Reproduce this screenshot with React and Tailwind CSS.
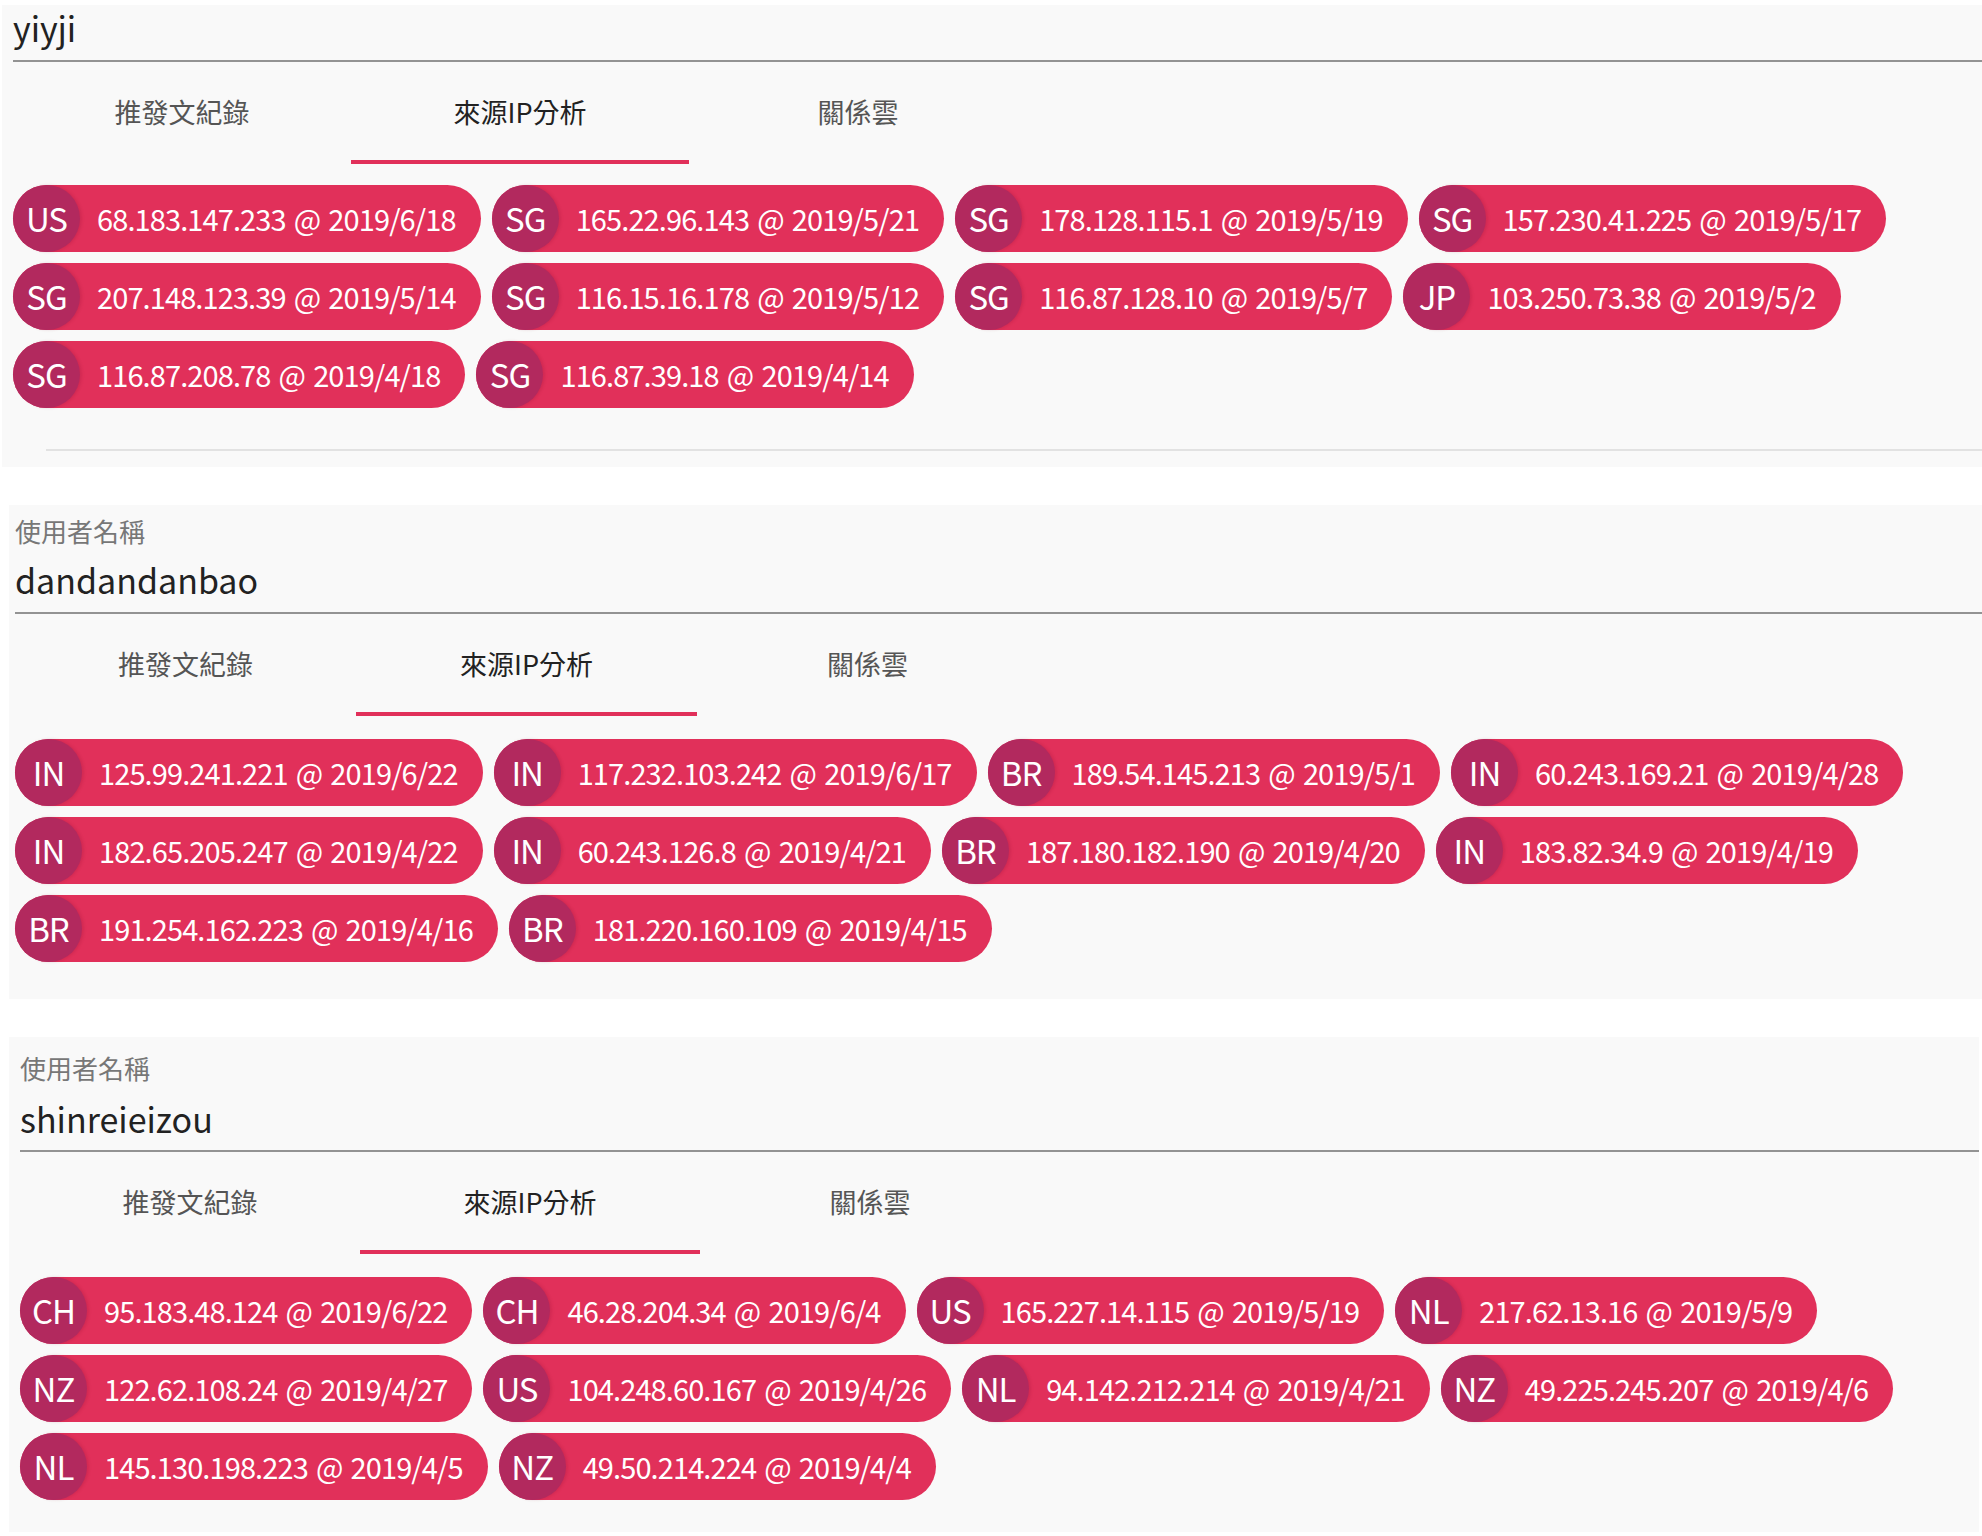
const PANELS = [
  {
    user: 'yiyji',
    showLabel: false,
    wrap: 'mt-[5px] ml-[2px] pt-[1px] pl-[11px] pb-[16px]',
    chipsTop: 'mt-[21px]',
    underPad: 'pb-[10px]',
    tabW: 'w-[338px]',
    divider: true,
    ips: [
      ['US', '68.183.147.233 @ 2019/6/18'],
      ['SG', '165.22.96.143 @ 2019/5/21'],
      ['SG', '178.128.115.1 @ 2019/5/19'],
      ['SG', '157.230.41.225 @ 2019/5/17'],
      ['SG', '207.148.123.39 @ 2019/5/14'],
      ['SG', '116.15.16.178 @ 2019/5/12'],
      ['SG', '116.87.128.10 @ 2019/5/7'],
      ['JP', '103.250.73.38 @ 2019/5/2'],
      ['SG', '116.87.208.78 @ 2019/4/18'],
      ['SG', '116.87.39.18 @ 2019/4/14'],
    ],
  },
  {
    user: 'dandandanbao',
    showLabel: true,
    wrap: 'mt-[38px] ml-[9px] pt-[11px] pl-[6px] pb-[37px]',
    labelGap: 'mt-[12px]',
    underPad: 'pb-[10px]',
    chipsTop: 'mt-[23px]',
    tabW: 'w-[341px]',
    ips: [
      ['IN', '125.99.241.221 @ 2019/6/22'],
      ['IN', '117.232.103.242 @ 2019/6/17'],
      ['BR', '189.54.145.213 @ 2019/5/1'],
      ['IN', '60.243.169.21 @ 2019/4/28'],
      ['IN', '182.65.205.247 @ 2019/4/22'],
      ['IN', '60.243.126.8 @ 2019/4/21'],
      ['BR', '187.180.182.190 @ 2019/4/20'],
      ['IN', '183.82.34.9 @ 2019/4/19'],
      ['BR', '191.254.162.223 @ 2019/4/16'],
      ['BR', '181.220.160.109 @ 2019/4/15'],
    ],
  },
  {
    user: 'shinreieizou',
    showLabel: true,
    wrap: 'mt-[38px] ml-[9px] mr-[3px] pt-[16px] pl-[11px] pb-[32px]',
    labelGap: 'mt-[14px]',
    underPad: 'pb-[9px]',
    chipsTop: 'mt-[23px]',
    tabW: 'w-[340px]',
    ips: [
      ['CH', '95.183.48.124 @ 2019/6/22'],
      ['CH', '46.28.204.34 @ 2019/6/4'],
      ['US', '165.227.14.115 @ 2019/5/19'],
      ['NL', '217.62.13.16 @ 2019/5/9'],
      ['NZ', '122.62.108.24 @ 2019/4/27'],
      ['US', '104.248.60.167 @ 2019/4/26'],
      ['NL', '94.142.212.214 @ 2019/4/21'],
      ['NZ', '49.225.245.207 @ 2019/4/6'],
      ['NL', '145.130.198.223 @ 2019/4/5'],
      ['NZ', '49.50.214.224 @ 2019/4/4'],
    ],
  },
]

const TABS = ['推發文紀錄', '來源IP分析', '關係雲']

function IpChip({ country, text }) {
  return (
    <div className="inline-flex h-[67px] items-center rounded-full bg-[#e1305a] text-white">
      <span className="flex h-[67px] w-[67px] shrink-0 items-center justify-center rounded-full bg-[#b2295e] text-[33px] leading-none tracking-[-1px] shadow-[2px_0_3px_rgba(120,0,40,0.15)]">
        {country}
      </span>
      <span className="pl-[17px] pr-[25px] text-[29px] leading-none tracking-[-0.9px] [word-spacing:2.5px] whitespace-nowrap">
        {text}
      </span>
    </div>
  )
}

function UserPanel({ panel }) {
  return (
    <section className={`bg-[#f9f9f9] ${panel.wrap}`}>
      {panel.showLabel && (
        <div className="h-[30px] text-[26px] leading-[30px] text-[#777]">使用者名稱</div>
      )}
      <div
        className={`border-b-2 border-[#939393] ${panel.showLabel ? panel.labelGap : ''} ${panel.underPad}`}
      >
        <div className="h-[44px] text-[34px] leading-[44px] text-[#222]">{panel.user}</div>
      </div>

      {/* tabs */}
      <div className="mt-[2px] flex">
        {TABS.map((t, i) => (
          <div
            key={t}
            className={`flex h-[100px] items-center justify-center border-b-4 text-[27px] ${panel.tabW} ${
              i === 1 ? 'border-[#e1305a] text-[#222]' : 'border-transparent text-[#555]'
            }`}
          >
            {t}
          </div>
        ))}
      </div>

      <div className={`flex flex-wrap gap-[11px] ${panel.chipsTop}`}>
        {panel.ips.map(([c, t]) => (
          <IpChip key={t} country={c} text={t} />
        ))}
      </div>

      {panel.divider && <div className="mt-[41px] ml-[33px] h-[2px] bg-[#e2e2e2]" />}
    </section>
  )
}

export default function App() {
  return (
    <div className="min-h-screen w-full overflow-hidden bg-white font-['Noto_Sans_CJK_TC','Noto_Sans_CJK_SC',sans-serif]">
      {PANELS.map((p) => (
        <UserPanel key={p.user} panel={p} />
      ))}
    </div>
  )
}
